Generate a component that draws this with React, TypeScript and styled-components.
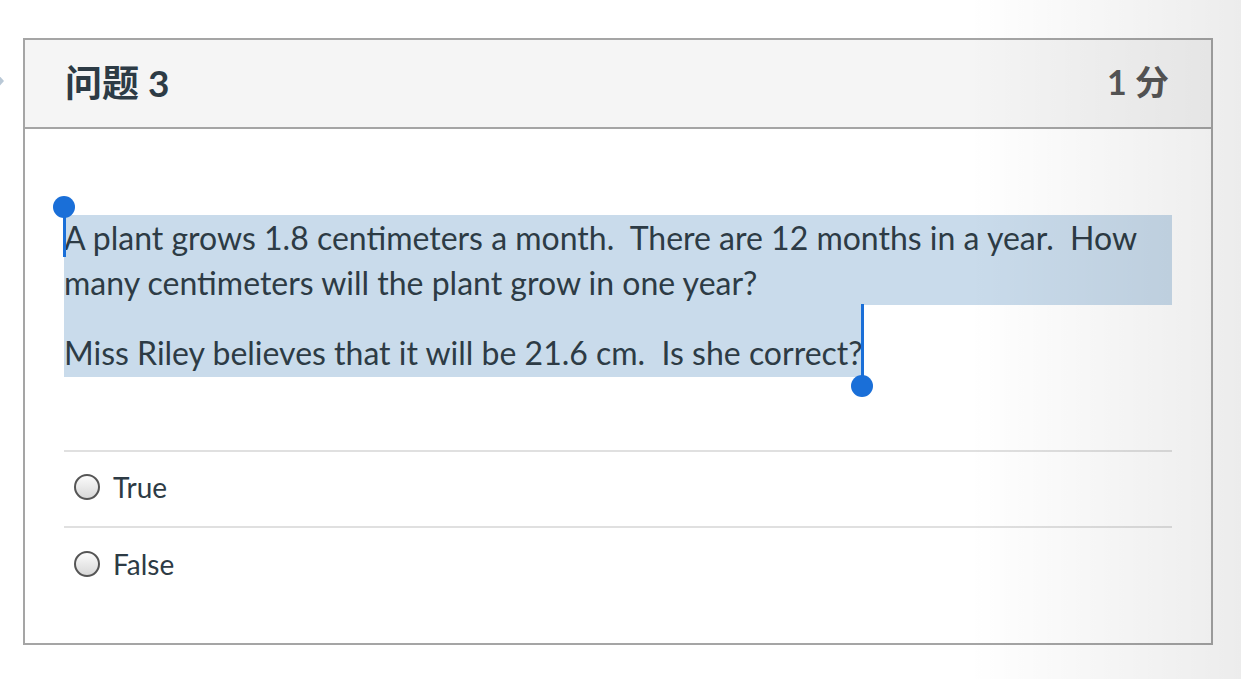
import React from 'react'
import styled, { createGlobalStyle } from 'styled-components'

const GlobalStyle = createGlobalStyle`
    html, body {
        margin: 0;
        padding: 0;
        background: #ffffff;
        font-family: Lato, "Noto Sans CJK SC", sans-serif;
        color: #2d3b45;
    }
    #root {
        min-height: 679px;
    }
`;

const Page = styled.div`
    position: relative;
    width: 1241px;
    height: 679px;
    padding: 38px 28px 0 23px;
    box-sizing: border-box;
    overflow: hidden;

    &::after {
        content: '';
        position: absolute;
        inset: 0;
        pointer-events: none;
        background: linear-gradient(to right, rgba(0,0,0,0) 78%, rgba(0,0,0,0.075) 100%);
    }
`;

const EdgeMark = styled.svg`
    position: absolute;
    left: -6px;
    top: 70px;
`;

const Card = styled.section`
    border: 2px solid #a5a5a5;
    height: 607px;
    box-sizing: border-box;
    display: flex;
    flex-direction: column;
`;

const Header = styled.header`
    height: 89px;
    box-sizing: border-box;
    background: #f5f5f5;
    border-bottom: 2px solid #a5a5a5;
    display: flex;
    align-items: center;
    justify-content: space-between;
    padding: 0 42px 6px 40px;
`;

const Title = styled.h2`
    margin: 0;
    font-size: 37px;
    font-weight: 700;
    color: #2d3b45;
    font-family: Lato, "Noto Sans CJK SC", sans-serif;
`;

const Points = styled.span`
    font-size: 34px;
    font-weight: 700;
    color: #565656;
    font-family: Lato, "Noto Sans CJK SC", sans-serif;
`;

const Body = styled.div`
    padding: 86px 39px 0 39px;
    position: relative;
`;

const Question = styled.div`
    position: relative;
    font-size: 32px;
    line-height: 45px;
    margin-bottom: 73px;
`;

const Para = styled.p<{ $full?: boolean }>`
    margin: 0;
    background: #c9dbeb;
    padding-bottom: ${p => (p.$full ? '0' : '2px')};
    white-space: pre-wrap;
`;

const Tail = styled.div`
    width: fit-content;
    background: #c9dbeb;
    padding-top: 25px;
`;

const HandleLine = styled.div<{ $x: number; $y: number; $h: number }>`
    position: absolute;
    left: ${p => p.$x}px;
    top: ${p => p.$y}px;
    width: 3px;
    height: ${p => p.$h}px;
    background: #1a6fd8;
`;

const HandleDot = styled.div<{ $x: number; $y: number }>`
    position: absolute;
    left: ${p => p.$x - 11}px;
    top: ${p => p.$y - 11}px;
    width: 22px;
    height: 22px;
    border-radius: 50%;
    background: #1a6fd8;
`;

const Answers = styled.ul`
    list-style: none;
    margin: 0;
    padding: 0;
    border-top: 2px solid #e0e0e0;
`;

const Answer = styled.li<{ $last?: boolean }>`
    display: flex;
    align-items: center;
    gap: 13px;
    height: 76px;
    box-sizing: border-box;
    padding: 0 0 4px 10px;
    border-bottom: ${p => (p.$last ? 'none' : '2px solid #e0e0e0')};
    font-size: 28px;
    color: #2d3b45;
`;

const Radio = styled.span`
    width: 26px;
    height: 26px;
    box-sizing: border-box;
    border-radius: 50%;
    border: 2px solid #555;
    background: linear-gradient(to bottom, #fbfbfb, #d8d8d8);
`;

export default function App() {
    return (
        <>
            <GlobalStyle />
            <Page>
                <EdgeMark width="14" height="22" viewBox="0 0 14 22">
                    <path d="M0 0 L10 11 L0 22 Z" fill="#b9c8d6" />
                    <path d="M0 4 L6 11 L0 18 Z" fill="#e4ebf1" />
                </EdgeMark>
                <Card>
                    <Header>
                        <Title>问题 3</Title>
                        <Points>1 分</Points>
                    </Header>
                    <Body>
                        <Question>
                            <Para $full>
                                A plant grows 1.8 centimeters a month.  There are 12 months in a year.  How many centimeters will the plant grow in one year?
                            </Para>
                            <Tail>
                                <Para>Miss Riley believes that it will be 21.6 cm.  Is she correct?</Para>
                            </Tail>
                            <HandleLine $x={-1} $y={-2} $h={44} />
                            <HandleDot $x={0} $y={-8} />
                            <HandleLine $x={797} $y={89} $h={82} />
                            <HandleDot $x={798} $y={171} />
                        </Question>
                        <Answers>
                            <Answer>
                                <Radio />
                                True
                            </Answer>
                            <Answer $last>
                                <Radio />
                                False
                            </Answer>
                        </Answers>
                    </Body>
                </Card>
            </Page>
        </>
    );
}
